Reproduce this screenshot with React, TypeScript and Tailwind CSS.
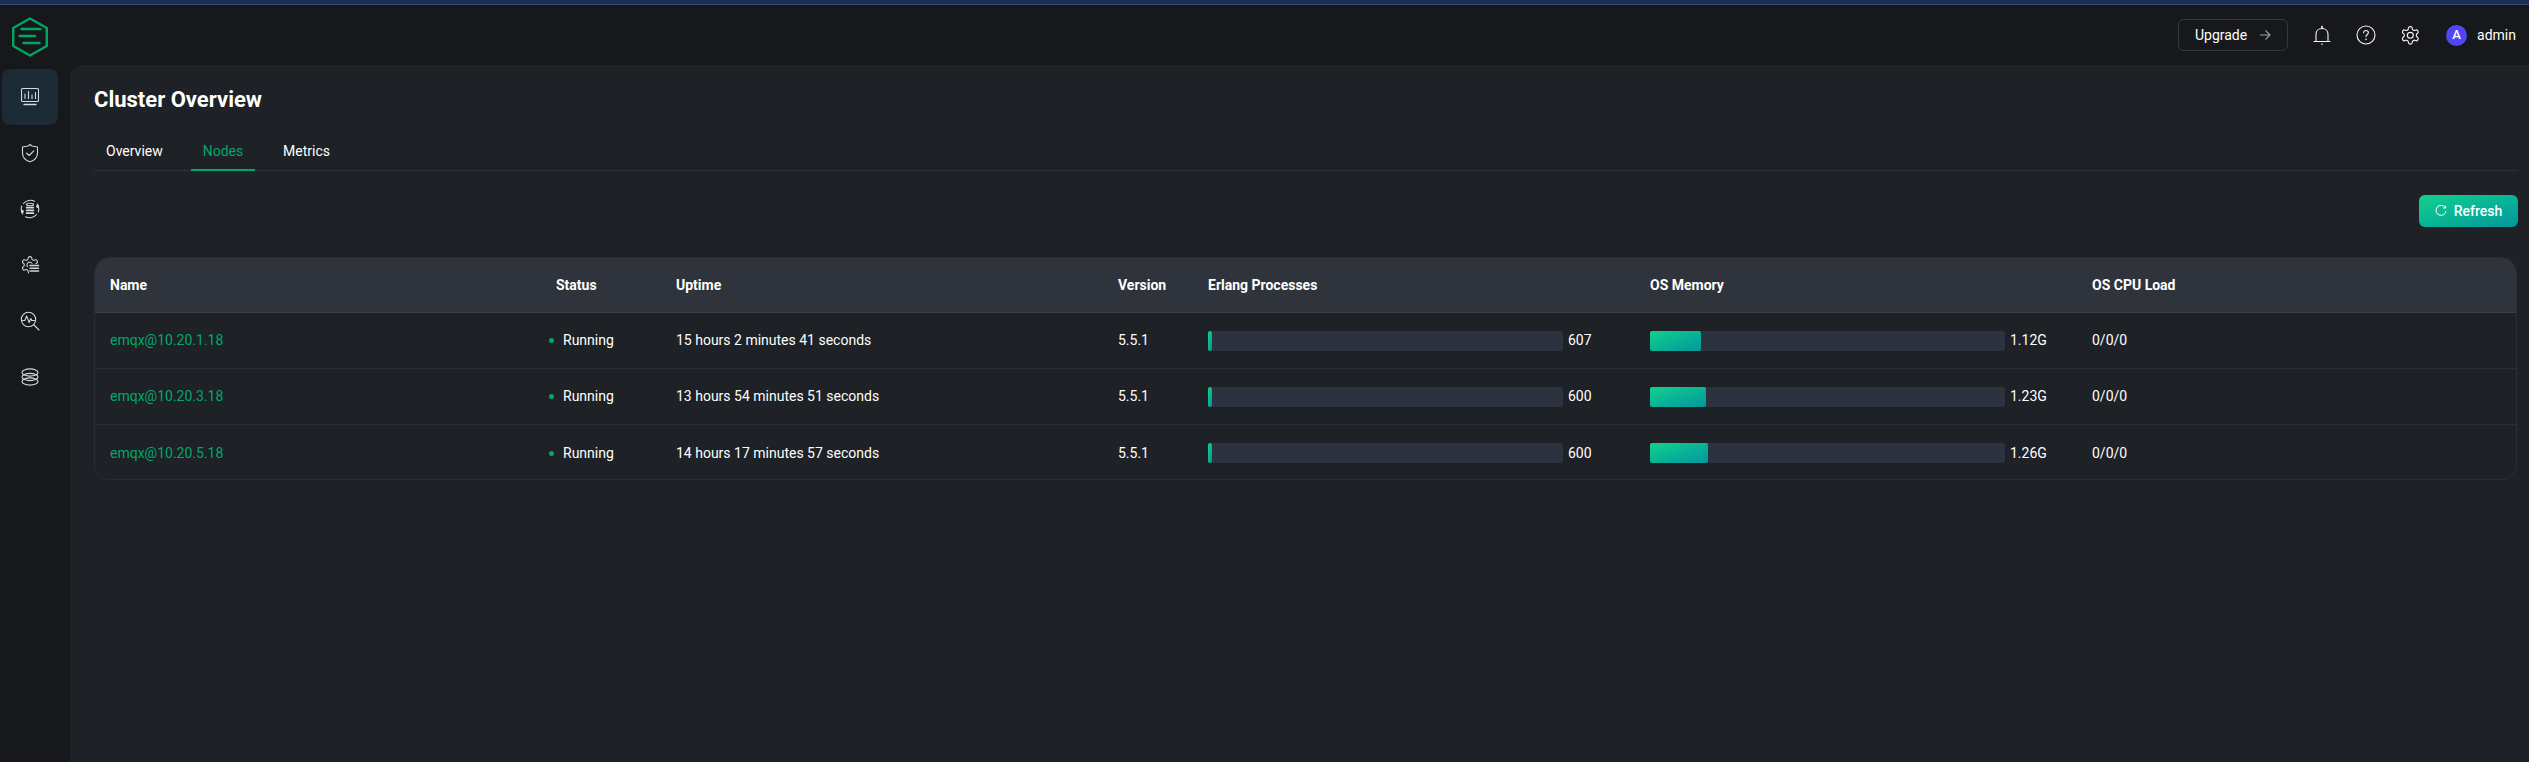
import React from "react";

type NodeRow = {
  name: string;
  uptime: string;
  procs: string;
  procsWidth: number;
  mem: string;
  memWidth: number;
};

const rows: NodeRow[] = [
  { name: "emqx@10.20.1.18", uptime: "15 hours 2 minutes 41 seconds", procs: "607", procsWidth: 4, mem: "1.12G", memWidth: 51 },
  { name: "emqx@10.20.3.18", uptime: "13 hours 54 minutes 51 seconds", procs: "600", procsWidth: 4, mem: "1.23G", memWidth: 56 },
  { name: "emqx@10.20.5.18", uptime: "14 hours 17 minutes 57 seconds", procs: "600", procsWidth: 4, mem: "1.26G", memWidth: 58 },
];

const columns = "grid grid-cols-[445px_120px_442px_90px_442px_442px_1fr]";

const gearPath =
  "M12.22 2h-.44a2 2 0 0 0-2 2v.18a2 2 0 0 1-1 1.73l-.43.25a2 2 0 0 1-2 0l-.15-.08a2 2 0 0 0-2.73.73l-.22.38a2 2 0 0 0 .73 2.73l.15.1a2 2 0 0 1 1 1.72v.51a2 2 0 0 1-1 1.74l-.15.09a2 2 0 0 0-.73 2.73l.22.38a2 2 0 0 0 2.73.73l.15-.08a2 2 0 0 1 2 0l.43.25a2 2 0 0 1 1 1.73V20a2 2 0 0 0 2 2h.44a2 2 0 0 0 2-2v-.18a2 2 0 0 1 1-1.73l.43-.25a2 2 0 0 1 2 0l.15.08a2 2 0 0 0 2.73-.73l.22-.39a2 2 0 0 0-.73-2.73l-.15-.08a2 2 0 0 1-1-1.74v-.5a2 2 0 0 1 1-1.74l.15-.09a2 2 0 0 0 .73-2.73l-.22-.38a2 2 0 0 0-2.73-.73l-.15.08a2 2 0 0 1-2 0l-.43-.25a2 2 0 0 1-1-1.73V4a2 2 0 0 0-2-2z";

function Logo() {
  return (
    <svg className="mt-[3px]" width="36" height="40" viewBox="0 0 36 40" fill="none" stroke="#00a661" strokeWidth="2.4" strokeLinecap="round" strokeLinejoin="round">
      <path d="M18 1.5 L34.8 11 V29 L18 38.5 L1.2 29 V11 Z" />
      <path d="M9.5 12 H28.5 M7.5 19 H23 M11.5 26 H27.5" />
    </svg>
  );
}

function SideIcon({ children }: { children: React.ReactNode }) {
  return (
    <svg width="20" height="20" viewBox="0 0 20 20" fill="none" stroke="#d5d7da" strokeWidth="1.1" strokeLinecap="round" strokeLinejoin="round">
      {children}
    </svg>
  );
}

const sideIcons: React.ReactNode[] = [
  <SideIcon>
    <rect x="1.5" y="1.5" width="17" height="13" rx="1" />
    <path d="M5 11.5 V7 M8.5 11.5 V4.5 M12 11.5 V8 M15.5 11.5 V5.5" />
    <path d="M4 17.5 H16" strokeWidth="1.4" />
  </SideIcon>,
  <SideIcon>
    <path d="M10 1.5 L12 3 L17.5 4 V10 C17.5 14.5 14 17.5 10 18.8 C6 17.5 2.5 14.5 2.5 10 V4 L8 3 Z" />
    <path d="M6.5 10 L9.2 12.5 L13.8 7.8" />
  </SideIcon>,
  <SideIcon>
    <path d="M3.5 4.5 A9 9 0 0 1 14.5 2.2 M16.5 15.5 A9 9 0 0 1 5.5 17.8 M2.7 15 A9 9 0 0 1 1.8 7 M18.2 13 A9 9 0 0 0 17.3 5" />
    <ellipse cx="10" cy="5.5" rx="3.6" ry="1.3" />
    <path d="M6.6 8.6 H13.4 M6.6 11.4 H13.4 M6.6 14.2 H13.4" strokeWidth="1.7" />
    <circle cx="17.6" cy="7.5" r="0.9" fill="#d5d7da" />
    <circle cx="2.4" cy="12.5" r="0.9" fill="#d5d7da" />
  </SideIcon>,
  <SideIcon>
    <g transform="scale(0.83)">
      <path d={gearPath} strokeWidth="1.3" />
      <path d="M9 14 A3.2 3.2 0 1 1 14.5 10" strokeWidth="1.3" />
    </g>
    <rect x="9" y="9" width="11" height="10" fill="#16181c" stroke="none" />
    <path d="M10 10.5 H18.5 M10 13.2 H18.5 M10 16 H18.5" strokeWidth="1.5" />
  </SideIcon>,
  <SideIcon>
    <circle cx="8.5" cy="8.5" r="7.2" />
    <path d="M14 14 L19 19" />
    <path d="M2.5 9.5 H4.8 L6.6 5 L9.2 11.5 L10.8 7.5 L11.8 9.5 H14.5" />
  </SideIcon>,
  <SideIcon>
    <ellipse cx="10" cy="5.5" rx="8" ry="3.6" />
    <ellipse cx="10" cy="10" rx="8" ry="3.6" />
    <ellipse cx="10" cy="14.5" rx="8" ry="3.6" />
  </SideIcon>,
];

function HeaderIcon({ children }: { children: React.ReactNode }) {
  return (
    <svg width="20" height="20" viewBox="0 0 20 20" fill="none" stroke="#f4f4f5" strokeWidth="1.1" strokeLinecap="round" strokeLinejoin="round">
      {children}
    </svg>
  );
}

function RowBar({ width, label }: { width: number; label: string }) {
  return (
    <div className="flex items-center">
      <div className="h-5 w-[355px] rounded-[2px] bg-[#2c323e]">
        <div
          className="h-5 rounded-[2px] bg-gradient-to-br from-[#14d18c] to-[#06979b]"
          style={{ width }}
        />
      </div>
      <span className="ml-[5px] text-[14px]">{label}</span>
    </div>
  );
}

export default function App() {
  return (
    <div
      className="flex h-[762px] w-[2529px] flex-col overflow-hidden bg-[#16181c] text-[14px] text-white"
      style={{ fontFamily: "Roboto, 'Liberation Sans', sans-serif" }}
    >
      <div className="h-[5px] border-b border-[#31486f] bg-[#1b2f57]" />

      <header className="flex h-[60px] items-center justify-between pl-3 pr-[13px]">
        <Logo />
        <div className="flex items-center">
          <button className="flex h-8 w-[110px] items-center justify-center rounded-md border border-[#35383d] text-[14px]">
            Upgrade
            <svg className="ml-3" width="12" height="12" viewBox="0 0 12 12" fill="none" stroke="#9a9da1" strokeWidth="1.1">
              <path d="M1 6 H11 M6.5 1.5 L11 6 L6.5 10.5" />
            </svg>
          </button>
          <div className="ml-[24px] flex items-center gap-[24px]">
            <HeaderIcon>
              <path d="M2 16.5 H18 M4 16.5 V9.5 C4 6 6.5 3.5 10 3.5 C13.5 3.5 16 6 16 9.5 V16.5" />
              <path d="M10 1.5 V3.5" strokeWidth="1.6" />
              <path d="M9.5 19 H10.5" />
            </HeaderIcon>
            <HeaderIcon>
              <circle cx="10" cy="10" r="9" />
              <path d="M7.6 7.8 C7.6 6.4 8.7 5.5 10 5.5 C11.4 5.5 12.4 6.4 12.4 7.7 C12.4 9.4 10 9.6 10 11.6" />
              <path d="M10 14.2 V14.6" strokeWidth="1.5" />
            </HeaderIcon>
            <HeaderIcon>
              <g transform="scale(0.875) translate(-0.2 -0.2)">
                <path d={gearPath} strokeWidth="1.3" />
                <circle cx="12" cy="12" r="3.4" strokeWidth="1.3" />
              </g>
            </HeaderIcon>
          </div>
          <div className="ml-[26px] flex h-[21px] w-[21px] items-center justify-center rounded-full bg-[#4f46f5] text-[13px] font-medium">
            A
          </div>
          <span className="ml-[10px] text-[14px]">admin</span>
        </div>
      </header>

      <div className="flex min-h-0 flex-1">
        <aside className="w-[70px] shrink-0 pl-[2px] pt-1">
          {sideIcons.map((icon, i) => (
            <div
              key={i}
              className={`flex h-14 w-14 items-center justify-center rounded-lg ${i === 0 ? "bg-[#1c2a36]" : ""}`}
            >
              {icon}
            </div>
          ))}
        </aside>

        <main className="min-w-0 flex-1 rounded-tl-xl bg-[#1e2126] pl-6 pr-[11px] pt-[21px]">
          <h1 className="text-[22px] font-bold leading-7">Cluster Overview</h1>

          <div className="mt-[19px] flex h-[38px] border-b border-[#2f3238]">
            <div className="flex h-[37px] w-[97px] items-center pl-3">Overview</div>
            <div className="flex h-[38px] w-16 items-center justify-center border-b-2 border-[#00a86b] text-[#00a86b]">
              Nodes
            </div>
            <div className="flex h-[37px] items-center pl-7">Metrics</div>
          </div>

          <div className="mt-6 flex justify-end">
            <button className="flex h-8 w-[99px] items-center justify-center rounded-md bg-gradient-to-br from-[#14d18c] to-[#06979b] text-[14px] font-medium">
              <svg className="mr-[7px]" width="12" height="12" viewBox="0 0 12 12" fill="none" stroke="#fff" strokeWidth="1">
                <path d="M10.2 2.6 A5 5 0 1 0 11 6" />
                <path d="M10.6 0.8 V3 H8.4" />
              </svg>
              Refresh
            </button>
          </div>

          <div className="mt-[30px] mr-px h-[223px] overflow-hidden rounded-2xl border border-[#2b2e33]">
            <div className={`${columns} h-[55px] items-center border-b border-[#3a3d42] bg-[#2f333b]`}>
              {["Name", "Status", "Uptime", "Version", "Erlang Processes", "OS Memory", "OS CPU Load"].map((h, i) => (
                <div key={h} className={`text-[14px] font-bold ${i === 0 ? "pl-[15px]" : "pl-4"}`}>
                  {h}
                </div>
              ))}
            </div>
            {rows.map((row, i) => (
              <div
                key={row.name}
                className={`${columns} h-14 items-center ${i < rows.length - 1 ? "border-b border-[#2b2e33]" : ""}`}
              >
                <div className="pl-[15px] text-[#00a86b]">{row.name}</div>
                <div className="flex items-center pl-[9px]">
                  <span className="h-[5px] w-[5px] rounded-full bg-[#00a86b]" />
                  <span className="ml-[9px]">Running</span>
                </div>
                <div className="pl-4">{row.uptime}</div>
                <div className="pl-4">5.5.1</div>
                <div className="pl-4">
                  <RowBar width={row.procsWidth} label={row.procs} />
                </div>
                <div className="pl-4">
                  <RowBar width={row.memWidth} label={row.mem} />
                </div>
                <div className="pl-4">0/0/0</div>
              </div>
            ))}
          </div>
        </main>
      </div>
    </div>
  );
}
